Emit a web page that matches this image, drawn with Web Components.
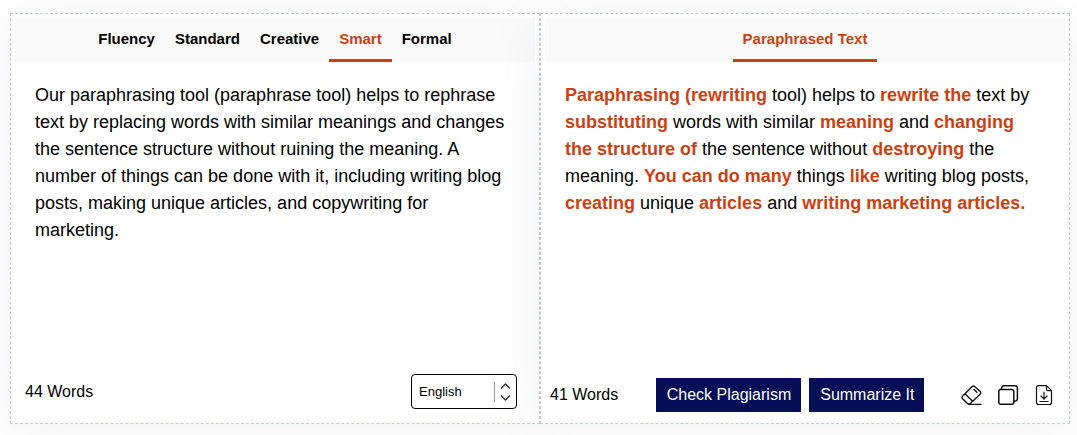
<!DOCTYPE html>
<html lang="en">
<head>
<meta charset="utf-8">
<meta name="viewport" content="width=device-width, initial-scale=1">
<title>Paraphrasing Tool</title>
<style>
  body {
    margin: 0;
    background: #fff;
    color: #000;
    font: 16px/24px "Liberation Sans", Arial, sans-serif;
    --accent: #ce3f10;
    --navy: #060e55;
    --bar: #fafafa;
    --line: #c5cad9;
  }
</style>
</head>
<body>
<paraphrase-app></paraphrase-app>

<script>
const define = (name, html, setup) => {
  const template = document.createElement('template');
  template.innerHTML = html;
  customElements.define(name, class extends HTMLElement {
    constructor() {
      super();
      this.attachShadow({ mode: 'open' }).append(template.content.cloneNode(true));
      if (setup) setup(this, this.shadowRoot);
    }
  });
};

// A single tab; the "selected" attribute gives it the accent underline.
define('mode-tab', `
  <style>
    :host { display: flex; }
    button {
      box-sizing: border-box; height: 44px; padding: 0 10px; margin: 0;
      border: 0; border-bottom: 3px solid transparent; background: none; color: inherit;
      font: bold 15px/20px "Liberation Sans", Arial, sans-serif; white-space: nowrap; cursor: pointer;
    }
    :host([selected]) button { color: var(--accent); border-bottom-color: var(--accent); }
  </style>
  <button type="button"><slot></slot></button>`);

// Dashed card with slots for tabs, the text and the footer.
define('text-panel', `
  <style>
    :host {
      display: flex; flex-direction: column; box-sizing: border-box; min-width: 0;
      padding: 4px; border: 1px dashed var(--line); background: #fff;
      box-shadow: 0 6px 60px rgba(0, 0, 0, .06);
    }
    nav { display: flex; justify-content: center; background: var(--bar); }
    main { flex: 1; display: flex; }
    ::slotted(*) { min-width: 0; }
  </style>
  <nav><slot name="tabs"></slot></nav>
  <main><slot></slot></main>
  <slot name="footer"></slot>`);

define('source-text', `
  <style>
    :host { display: flex; flex: 1; }
    textarea {
      flex: 1; box-sizing: border-box; min-width: 0; min-height: 302px; margin: 0; padding: 20px;
      border: 0; outline: 0; resize: none; background: none; color: #000;
      font: 18px/27px "Liberation Sans", Arial, sans-serif; overflow: auto;
    }
  </style>
  <textarea aria-label="Your text" spellcheck="false">Our paraphrasing tool (paraphrase tool) helps to rephrase text by replacing words with similar meanings and changes the sentence structure without ruining the meaning. A number of things can be done with it, including writing blog posts, making unique articles, and copywriting for marketing.</textarea>`);

define('result-text', `
  <style>
    :host { display: block; flex: 1; box-sizing: border-box; padding: 20px; font-size: 18px; line-height: 27px; }
    p { margin: 0; }
    b { color: var(--accent); }
  </style>
  <p><b>Paraphrasing (rewriting</b> tool) helps to <b>rewrite the</b> text by <b>substituting</b> words with similar <b>meaning</b> and <b>changing the structure of</b> the sentence without <b>destroying</b> the meaning. <b>You can do many</b> things <b>like</b> writing blog posts, <b>creating</b> unique <b>articles</b> and <b>writing marketing articles.</b></p>`);

define('language-select', `
  <style>
    :host { display: grid; width: 106px; }
    select, svg { grid-area: 1 / 1; }
    select {
      appearance: none; box-sizing: border-box; width: 100%; height: 35px; margin: 0; padding: 0 28px 0 7px;
      border: 1px solid #000; border-radius: 4px; background: #fff; color: #000;
      font: 13px/20px "Liberation Sans", Arial, sans-serif;
    }
    svg { justify-self: end; align-self: center; margin-right: 6px; pointer-events: none; }
  </style>
  <select aria-label="Language"><option>English</option></select>
  <svg width="18" height="20" viewBox="0 0 18 20" fill="none" aria-hidden="true">
    <path d="M1.500 0v20" stroke="#999"/>
    <path d="M8 6.500l4.500-4.500 4.500 4.500M8 13.500l4.500 4.500 4.500-4.500" stroke="#333" stroke-width="1.300"/>
  </svg>`);

define('action-button', `
  <style>
    :host { display: flex; }
    button {
      height: 34px; margin: 0; padding: 0 10px 0 11px; border: 0; background: var(--navy); color: #fff;
      font: 16px/24px "Liberation Sans", Arial, sans-serif; white-space: nowrap; cursor: pointer;
    }
  </style>
  <button type="button"><slot></slot></button>`);

const icons = {
  erase: ['Clear text', `<path d="M.4 11.200 10.200 1.500q1.200-1.100 2.400 0l5.700 5.100q1.100 1.200 0 2.300l-9.700 9.400q-1.700 1.500-3.400 0L.4 13.600q-1.100-1.200 0-2.400zM3 8.800l7.300 7.200M12 4.500l2.900 2.800M6.500 19.400h12.500"/>`],
  copy: ['Copy text', `<rect x=".8" y="4.500" width="15" height="14.800" rx="2" stroke-width="1.500"/><path d="M3.500 3.800Q3.800.8 6 .8h11q2.400 0 2.400 2.400v10.500q0 2.400-3 2.600" stroke-width="1.500"/>`],
  download: ['Download text', `<path d="M4 .7h8.500l5 5v11.800q0 2-2 2H4.500q-2 0-2-2V2.700q0-2 2-2zM12.500.7v3.500q0 1.500 1.500 1.500h3.500" stroke-width="1.200"/><path d="M10 7.200v7M7 11l3 3.200 3-3.200M6 16.500h8" stroke-width="1.200"/>`]
};

define('icon-button', `
  <style>
    :host { display: flex; }
    button { display: flex; margin: 0; padding: 0; border: 0; background: none; color: #111; cursor: pointer; }
  </style>
  <button type="button"><svg width="20" height="20" viewBox="0 0 20 20" overflow="visible" fill="none" stroke="currentColor" stroke-width="1.400" stroke-linecap="round" stroke-linejoin="round" aria-hidden="true"></svg></button>`,
  (host, root) => {
    const [label, shape] = icons[host.getAttribute('name')];
    root.querySelector('button').setAttribute('aria-label', label);
    root.querySelector('svg').innerHTML = shape;
  });

define('paraphrase-app', `
  <style>
    :host { display: grid; grid-template-columns: 1fr 1fr; padding: 13px 7px 11px 10px; }
    footer { display: flex; align-items: center; justify-content: space-between; }
    .source { padding: 10px 18px 10px 10px; }
    .result { padding: 7px 11px 7px 5px; }
    .actions { display: flex; gap: 8px; }
    .icons { display: flex; gap: 16px; }
    @media (max-width: 900px) { :host { grid-template-columns: 1fr; } }
  </style>
  <text-panel>
    <mode-tab slot="tabs">Fluency</mode-tab>
    <mode-tab slot="tabs">Standard</mode-tab>
    <mode-tab slot="tabs">Creative</mode-tab>
    <mode-tab slot="tabs" selected>Smart</mode-tab>
    <mode-tab slot="tabs">Formal</mode-tab>
    <source-text></source-text>
    <footer slot="footer" class="source">
      <span>44 Words</span>
      <language-select></language-select>
    </footer>
  </text-panel>
  <text-panel>
    <mode-tab slot="tabs" selected>Paraphrased Text</mode-tab>
    <result-text></result-text>
    <footer slot="footer" class="result">
      <span>41 Words</span>
      <div class="actions">
        <action-button>Check Plagiarism</action-button>
        <action-button>Summarize It</action-button>
      </div>
      <div class="icons">
        <icon-button name="erase"></icon-button>
        <icon-button name="copy"></icon-button>
        <icon-button name="download"></icon-button>
      </div>
    </footer>
  </text-panel>`);
</script>
</body>
</html>
